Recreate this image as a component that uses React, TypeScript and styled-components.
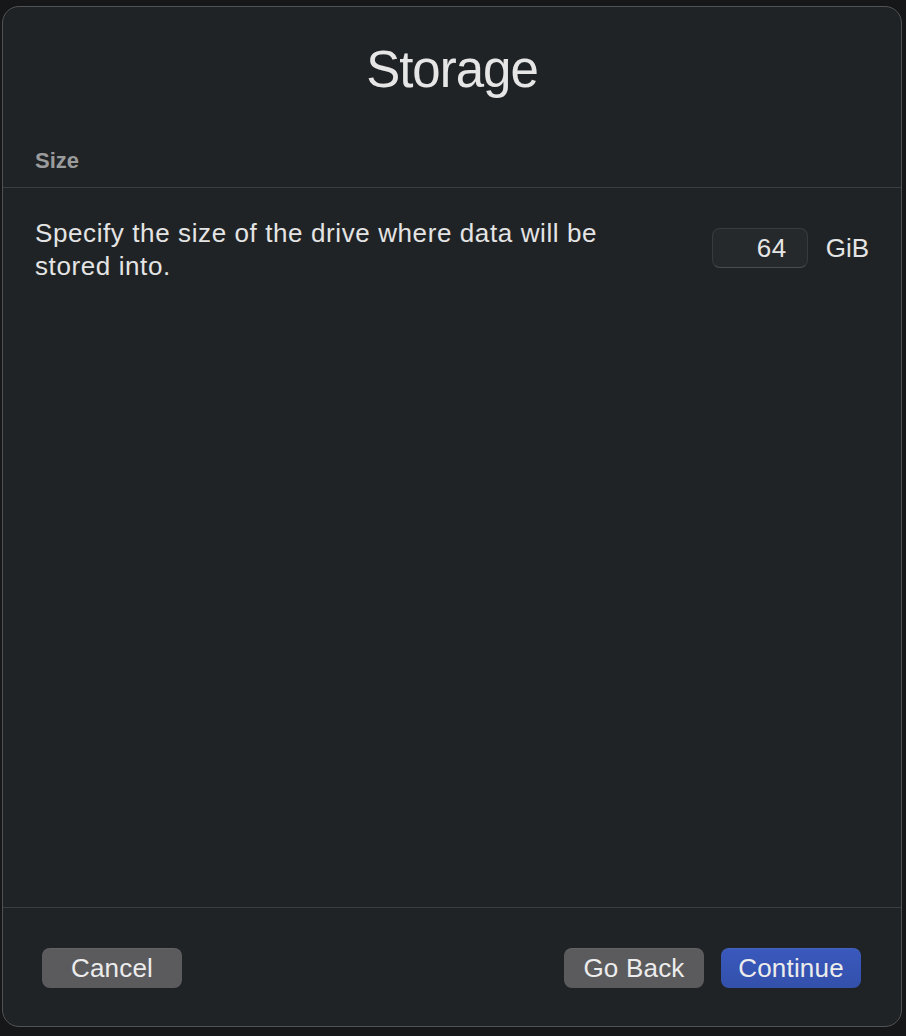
import React from "react";
import styled, { createGlobalStyle } from "styled-components";

const GlobalStyle = createGlobalStyle`
    html, body {
        margin: 0;
        padding: 0;
        background: #161718;
    }
    body {
        font-family: "Liberation Sans", Arial, sans-serif;
        -webkit-font-smoothing: antialiased;
    }
`;

const Page = styled.div`
    width: 906px;
    height: 1036px;
    padding: 6px 4px 0 2px;
    box-sizing: border-box;
`;

const Sheet = styled.div`
    height: 1021px;
    box-sizing: border-box;
    display: flex;
    flex-direction: column;
    background: #202325;
    border: 1px solid #505355;
    border-radius: 17px;
    overflow: hidden;
`;

const Title = styled.h1`
    margin: 0;
    padding-top: 33px;
    font-size: 51px;
    line-height: 60px;
    font-weight: 400;
    letter-spacing: -1px;
    text-align: center;
    color: #e6e6e6;
`;

const SectionHeader = styled.div`
    margin-top: 48px;
    padding: 0 32px 13px;
    font-size: 22px;
    line-height: 26px;
    font-weight: 700;
    color: #9a9b9c;
    border-bottom: 1px solid #3b3e40;
`;

const Row = styled.div`
    display: flex;
    align-items: center;
    padding: 29px 32px 0 32px;
`;

const Description = styled.p`
    margin: 0;
    width: 600px;
    font-size: 26px;
    line-height: 33px;
    letter-spacing: 0.6px;
    color: #e4e4e4;
`;

const SizeControl = styled.div`
    margin-left: auto;
    margin-bottom: 4px;
    display: flex;
    align-items: center;
    gap: 18px;
`;

const SizeInput = styled.input`
    width: 96px;
    height: 40px;
    box-sizing: border-box;
    padding: 0 20px 0 8px;
    background: #26292b;
    border: 1px solid #383b3e;
    border-bottom-color: #4a4d50;
    border-radius: 8px;
    color: #e6e6e6;
    font-family: "Liberation Sans", Arial, sans-serif;
    font-size: 26px;
    letter-spacing: 0.5px;
    text-align: right;
    outline: none;
`;

const Unit = styled.span`
    font-size: 26px;
    color: #e4e4e4;
`;

const Spacer = styled.div`
    flex: 1;
`;

const Footer = styled.div`
    display: flex;
    align-items: center;
    gap: 17px;
    padding: 40px 40px 38px 39px;
    border-top: 1px solid #3b3e40;
`;

const Button = styled.button<{ $primary?: boolean }>`
    width: 140px;
    height: 40px;
    border: none;
    border-radius: 8px;
    background: ${({ $primary }) =>
        $primary ? "linear-gradient(#3a59bd, #3350ab)" : "#5b5b5d"};
    box-shadow: 0 1px 0 rgba(255, 255, 255, 0.06) inset;
    color: #ececec;
    font-family: "Liberation Sans", Arial, sans-serif;
    font-size: 26px;
    letter-spacing: 0.2px;
    padding: 0;
`;

const Push = styled.div`
    margin-left: auto;
`;

const App: React.FC = () => {
    return (
        <Page>
            <GlobalStyle />
            <Sheet>
                <Title>Storage</Title>
                <SectionHeader>Size</SectionHeader>
                <Row>
                    <Description>
                        Specify the size of the drive where data will be stored
                        into.
                    </Description>
                    <SizeControl>
                        <SizeInput defaultValue="64" />
                        <Unit>GiB</Unit>
                    </SizeControl>
                </Row>
                <Spacer />
                <Footer>
                    <Button>Cancel</Button>
                    <Push />
                    <Button>Go Back</Button>
                    <Button $primary>Continue</Button>
                </Footer>
            </Sheet>
        </Page>
    );
};

export default App;
